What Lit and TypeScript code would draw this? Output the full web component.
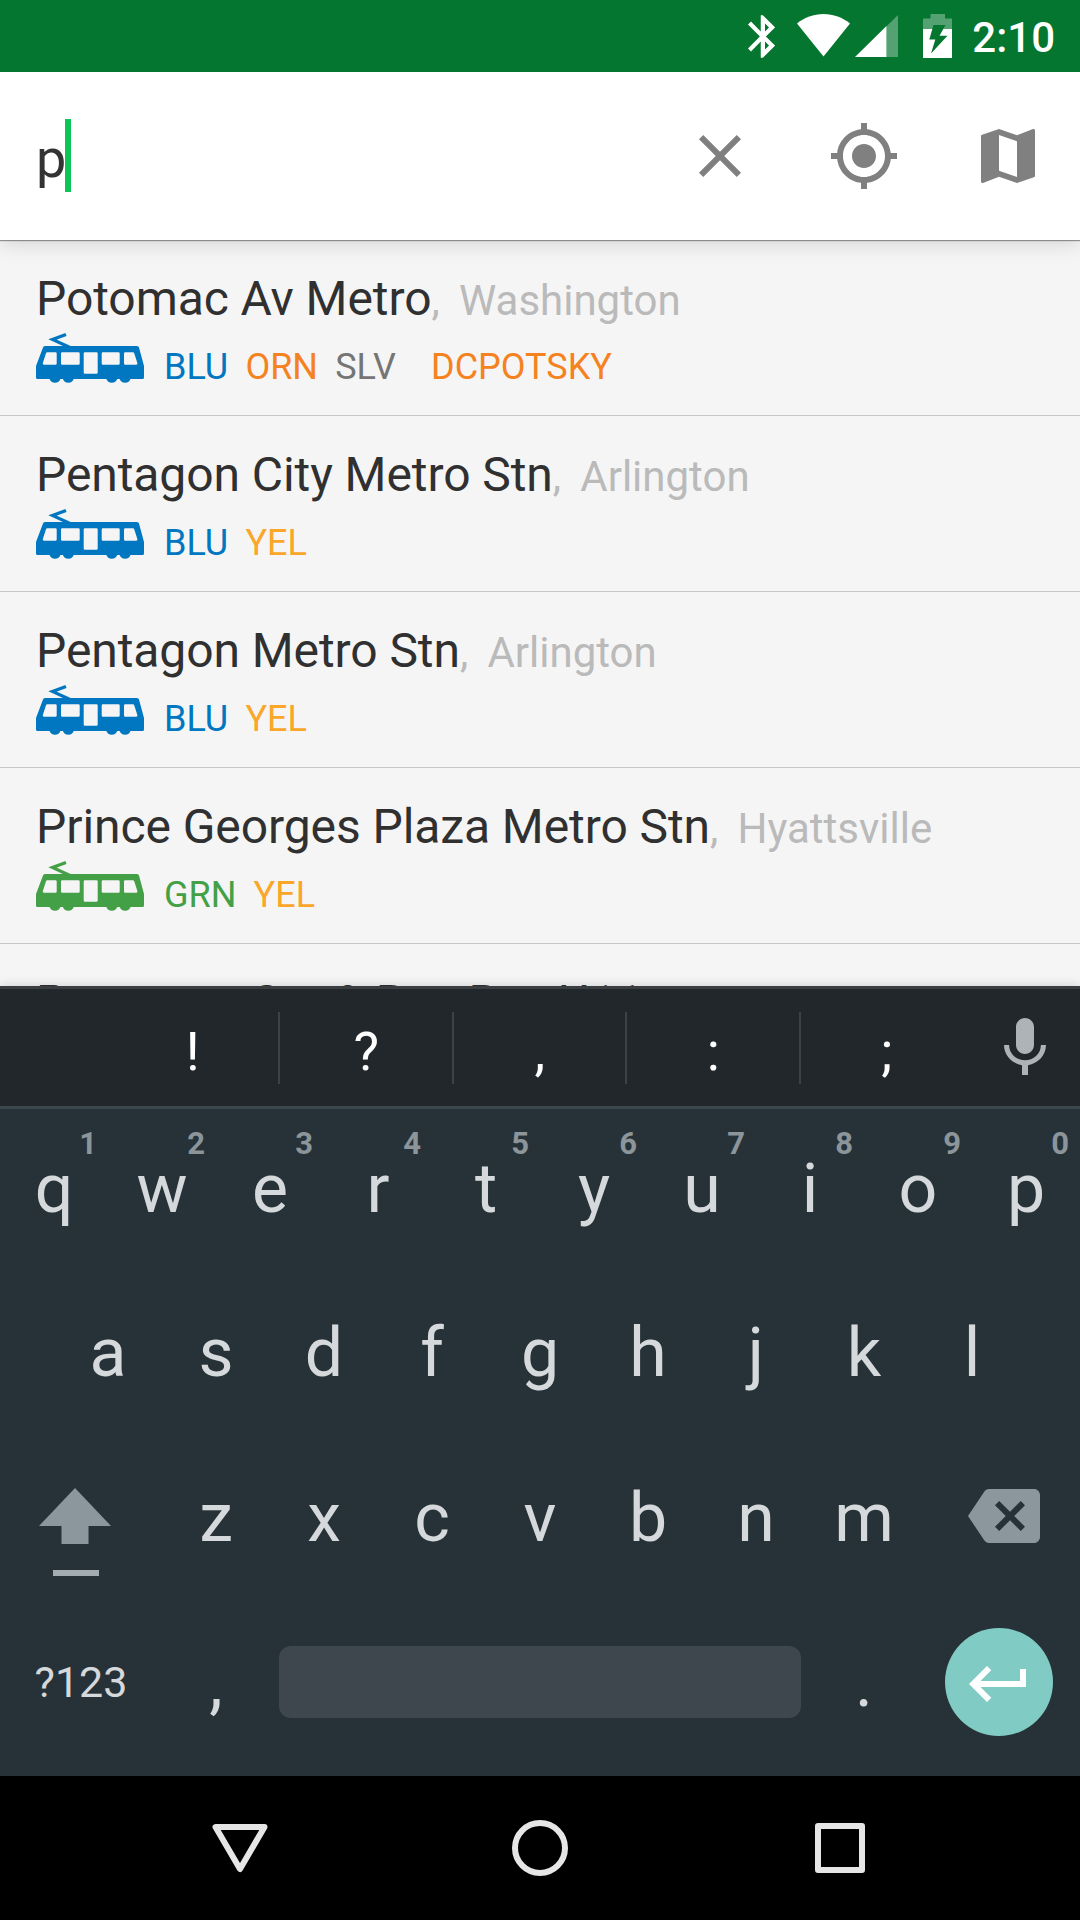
import { LitElement, html, css, svg, nothing } from "lit";
import { customElement, property } from "lit/decorators.js";

type Line = { code: string; tone: string; apart?: boolean };
type Stop = { name: string; city: string; tram: string; lines: Line[] };

const STOPS: Stop[] = [
  {
    name: "Potomac Av Metro",
    city: "Washington",
    tram: "blue",
    lines: [
      { code: "BLU", tone: "blue" },
      { code: "ORN", tone: "orange" },
      { code: "SLV", tone: "silver" },
      { code: "DCPOTSKY", tone: "orange", apart: true },
    ],
  },
  {
    name: "Pentagon City Metro Stn",
    city: "Arlington",
    tram: "blue",
    lines: [
      { code: "BLU", tone: "blue" },
      { code: "YEL", tone: "yellow" },
    ],
  },
  {
    name: "Pentagon Metro Stn",
    city: "Arlington",
    tram: "blue",
    lines: [
      { code: "BLU", tone: "blue" },
      { code: "YEL", tone: "yellow" },
    ],
  },
  {
    name: "Prince Georges Plaza Metro Stn",
    city: "Hyattsville",
    tram: "green",
    lines: [
      { code: "GRN", tone: "green" },
      { code: "YEL", tone: "yellow" },
    ],
  },
  { name: "Pentagon Stn & Bus Bay U11", city: "", tram: "blue", lines: [] },
];

@customElement("status-bar")
export class StatusBar extends LitElement {
  static styles = css`
    :host {
      display: flex;
      height: 72px;
      background: #04762f;
      color: #fff;
      justify-content: flex-end;
      align-items: flex-start;
      padding-right: 25px;
      box-sizing: border-box;
      flex: none;
    }
    svg {
      display: block;
      flex: none;
    }
    .bt { margin: 15px 22px 0 0; }
    .wifi { margin: 14px 5px 0 0; }
    .signal { margin: 15px 25px 0 0; }
    .battery { margin: 14px 20px 0 0; }
    .clock {
      font: 500 42px/48px Roboto, sans-serif;
      margin-top: 14px;
    }
  `;
  render() {
    return html`
      <svg class="bt" width="27" height="43" viewBox="5 2 12.7 20">
        <path fill="#fff" d="M17.71 7.71L12 2h-1v7.59L6.41 5 5 6.41 10.59 12 5 17.59 6.41 19 11 14.41V22h1l5.71-5.71-4.3-4.29 4.3-4.29zM13 5.83l1.88 1.88L13 9.59V5.83zm1.88 10.46L13 18.17v-3.76l1.88 1.88z" />
      </svg>
      <svg class="wifi" width="53" height="43" viewBox="0 0 53 43">
        <path fill="#fff" d="M0 9.5C7.6 3.4 16.500 0 26.500 0S45.400 3.400 53 9.500L26.500 42.500z" />
      </svg>
      <svg class="signal" width="43" height="42" viewBox="0 0 43 42">
        <path fill="#fff" opacity=".32" d="M31.500 11.300L43 0v42H31.500z" />
        <path fill="#fff" d="M0 42L31.500 11v31z" />
      </svg>
      <svg class="battery" width="29" height="44" viewBox="0 0 29 44">
        <path fill="#fff" opacity=".32" d="M7.500 0h14.500v4.500h7V15H0V4.500h7.500z" />
        <path fill="#fff" d="M0 15h29v29H0z" />
        <path fill="#04762f" d="M10.500 11h12l-6 10.700h8L8 39.500l4.300-14H6.300z" />
      </svg>
      <div class="clock">2:10</div>
    `;
  }
}

@customElement("search-header")
export class SearchHeader extends LitElement {
  static styles = css`
    :host {
      display: flex;
      height: 168px;
      background: #fff;
      align-items: center;
      flex: none;
      z-index: 1;
      box-shadow: 0 1px 1px rgba(0, 0, 0, 0.38), 0 4px 20px rgba(0, 0, 0, 0.13);
      clip-path: inset(0 0 -30px 0);
    }
    .query {
      flex: 1;
      display: flex;
      align-items: center;
      padding-left: 36px;
    }
    .text {
      font: 400 54px/64px Roboto, sans-serif;
      color: #333;
      margin-top: 6px;
    }
    .caret {
      width: 6px;
      height: 73px;
      margin-left: -1px;
      margin-bottom: 2px;
      background: #0cc657;
    }
    .action {
      width: 144px;
      display: flex;
      justify-content: center;
    }
    svg {
      display: block;
      fill: #808080;
    }
  `;
  render() {
    return html`
      <div class="query"><span class="text">p</span><span class="caret"></span></div>
      <div class="action">
        <svg width="72" height="72" viewBox="0 0 24 24"><path d="M19 6.410L17.590 5 12 10.590 6.410 5 5 6.410 10.590 12 5 17.590 6.410 19 12 13.410 17.590 19 19 17.590 13.410 12z" /></svg>
      </div>
      <div class="action">
        <svg width="72" height="72" viewBox="0 0 24 24"><path d="M12 8c-2.210 0-4 1.790-4 4s1.790 4 4 4 4-1.790 4-4-1.790-4-4-4zm8.940 3c-.46-4.170-3.770-7.480-7.940-7.940V1h-2v2.060C6.830 3.520 3.520 6.830 3.060 11H1v2h2.060c.46 4.170 3.770 7.480 7.940 7.940V23h2v-2.060c4.170-.46 7.480-3.770 7.940-7.940H23v-2h-2.060zM12 19c-3.870 0-7-3.130-7-7s3.130-7 7-7 7 3.130 7 7-3.130 7-7 7z" /></svg>
      </div>
      <div class="action">
        <svg width="72" height="72" viewBox="0 0 24 24"><path d="M20.500 3l-.16.03L15 5.100 9 3 3.360 4.900c-.21.07-.36.25-.36.48V20.500c0 .28.22.5.5.5l.16-.03L9 18.900l6 2.100 5.640-1.900c.21-.07.36-.25.36-.48V3.500c0-.28-.22-.5-.5-.5zM15 19l-6-2.110V5l6 2.110V19z" /></svg>
      </div>
    `;
  }
}

@customElement("stop-row")
export class StopRow extends LitElement {
  @property({ attribute: false }) stop!: Stop;
  static styles = css`
    :host {
      display: block;
      height: 176px;
      flex: none;
      box-sizing: border-box;
      padding: 31px 36px 0;
      border-bottom: 1px solid #c6c8c8;
      font-family: Roboto, sans-serif;
      white-space: nowrap;
    }
    .title {
      display: flex;
      align-items: baseline;
      height: 56px;
      line-height: 56px;
      font-size: 48px;
      letter-spacing: -0.08px;
      color: #303030;
    }
    .city {
      font-size: 42px;
      letter-spacing: 0;
      word-spacing: -0.8px;
      color: #bababa;
      white-space: pre;
    }
    .lines {
      display: flex;
      align-items: flex-start;
      padding-top: 6px;
    }
    svg {
      display: block;
      margin-right: 20px;
    }
    .codes {
      display: flex;
      gap: 17.2px;
      font-size: 36px;
      line-height: 48px;
      margin-top: 10px;
    }
    .apart { margin-left: 18px; }
    .blue { color: #0077c0; }
    .orange { color: #f58220; }
    .silver { color: #757575; }
    .yellow { color: #faa629; }
    .green { color: #43a047; }
  `;
  render() {
    const s = this.stop;
    return html`
      <div class="title">
        <span>${s.name}</span>${s.city ? html`<span class="city">,  ${s.city}</span>` : nothing}
      </div>
      ${s.lines.length
        ? html`<div class="lines">
            <svg class=${s.tram} width="108" height="51" viewBox="0 0 108 51">
              <path fill="none" stroke="currentColor" stroke-width="3.200" d="M30 1.500L16.500 6.500 34 14.500" />
              <path
                fill="currentColor"
                fill-rule="evenodd"
                d="M9 13h92q1.500 0 2 1.500L108 33v11.500q0 1.500-1.500 1.500H94.500a5.600 5 0 0 1-10.800 0h-2.500a5.600 5 0 0 1-10.800 0H37.700a5.600 5 0 0 1-10.800 0h-2.500a5.600 5 0 0 1-10.800 0H1.500Q0 46 0 44.500V33L7 14.500Q7.400 13 9 13z
                M11.500 19.300h8q1.200 0 1.200 1.200v10q0 1.200-1.200 1.200H8q-1.500 0-1.200-1.400l3-9.600q.4-1.400 1.700-1.400z
                M26.200 19.300h16.300q1.200 0 1.200 1.200v10q0 1.200-1.200 1.200H26.200q-1.200 0-1.200-1.200v-10q0-1.200 1.200-1.200z
                M48.900 19.300h11.600q1.200 0 1.200 1.200v19q0 1.200-1.200 1.200H48.900q-1.200 0-1.200-1.200v-19q0-1.200 1.200-1.200z
                M66.900 19.300h15.600q1.200 0 1.200 1.200v10q0 1.200-1.200 1.200H66.900q-1.200 0-1.200-1.200v-10q0-1.200 1.200-1.200z
                M89.200 19.300h7.500q1.300 0 1.700 1.400l3 9.600q.3 1.400-1.200 1.400h-11q-1.200 0-1.200-1.200v-10q0-1.200 1.200-1.200z"
              />
            </svg>
            <div class="codes">
              ${s.lines.map((l) => html`<span class="${l.tone} ${l.apart ? "apart" : ""}">${l.code}</span>`)}
            </div>
          </div>`
        : nothing}
    `;
  }
}

@customElement("key-board")
export class KeyBoard extends LitElement {
  static styles = css`
    :host {
      display: flex;
      flex-direction: column;
      height: 790px;
      flex: none;
      z-index: 1;
      background: #273238;
      font-family: Roboto, sans-serif;
      color: #d5d9dc;
      box-shadow: 0 0 10px rgba(0, 0, 0, 0.16);
    }
    svg { display: block; }
    .suggest {
      display: flex;
      height: 123px;
      box-sizing: border-box;
      border-top: 3px solid #3a3e41;
      border-bottom: 3px solid #3d484e;
      background: #22272b;
      padding-left: 106.5px;
      align-items: center;
    }
    .mark {
      width: 173.5px;
      height: 72px;
      box-sizing: border-box;
      border-right: 2px solid #3c4347;
      padding-left: 1px;
      text-align: center;
      font-size: 54px;
      line-height: 80px;
      color: #fff;
      margin-top: 1px;
    }
    .mark:nth-child(5) { border-right-color: transparent; }
    .mic { margin: 1px 0 0 15px; }
    .row {
      display: flex;
      height: 165px;
      align-items: center;
      font-size: 68px;
      line-height: 80px;
    }
    .first { height: 161px; padding-bottom: 2px; box-sizing: border-box; }
    .second { padding: 0 54px; }
    .key {
      width: 108px;
      text-align: center;
      position: relative;
    }
    .hint {
      position: absolute;
      top: -23px;
      right: 11px;
      font-size: 31px;
      line-height: 36px;
      font-weight: 700;
      color: #8b959a;
    }
    .wide {
      width: 162px;
      display: flex;
      justify-content: center;
    }
    .shift { justify-content: flex-start; padding: 29px 0 0 39px; box-sizing: border-box; }
    .back { padding: 0 0 3px 10px; box-sizing: border-box; }
    .mode { font-size: 43px; margin-bottom: 2px; }
    .space {
      width: 522px;
      height: 72px;
      margin: 0 9px 2px;
      border-radius: 12px;
      background: #3d474d;
    }
    .enter {
      width: 108px;
      height: 108px;
      margin-bottom: 2px;
      border-radius: 50%;
      background: #80cbc4;
      display: flex;
      align-items: center;
      justify-content: center;
    }
    .enter svg { margin-top: 4px; }
  `;
  private keys(letters: string, hints = "") {
    return [...letters].map(
      (c, i) => html`<div class="key">${c}${hints ? html`<span class="hint">${hints[i]}</span>` : nothing}</div>`,
    );
  }
  render() {
    return html`
      <div class="suggest">
        ${["!", "?", ",", ":", ";"].map((c) => html`<div class="mark">${c}</div>`)}
        <svg class="mic" width="72" height="72" viewBox="0 0 24 24"><path fill="#aeb3b7" d="M12 14c1.660 0 2.990-1.340 2.990-3L15 5c0-1.660-1.340-3-3-3S9 3.340 9 5v6c0 1.660 1.340 3 3 3zm5.300-3c0 3-2.540 5.100-5.300 5.100S6.700 14 6.700 11H5c0 3.410 2.720 6.230 6 6.720V21h2v-3.280c3.280-.48 6-3.300 6-6.720h-1.700z" /></svg>
      </div>
      <div class="row first">${this.keys("qwertyuiop", "1234567890")}</div>
      <div class="row second">${this.keys("asdfghjkl")}</div>
      <div class="row">
        <div class="wide shift">
          <svg width="72" height="88" viewBox="0 0 72 88">
            <path fill="#8b979d" d="M36 0l36 38H49.500v18h-27V38H0z" />
            <path fill="#a3adb1" d="M14 82h46v6H14z" />
          </svg>
        </div>
        ${this.keys("zxcvbnm")}
        <div class="wide back">
          <svg width="72" height="72" viewBox="0 0 24 24"><path fill="#8b979d" d="M22 3H7c-.69 0-1.230.35-1.590.88L0 12l5.410 8.110c.36.53.9.89 1.590.89h15c1.100 0 2-.9 2-2V5c0-1.100-.9-2-2-2zm-3 12.590L17.590 17 14 13.410 10.410 17 9 15.590 12.590 12 9 8.410 10.410 7 14 10.590 17.590 7 19 8.410 15.410 12 19 15.590z" /></svg>
        </div>
      </div>
      <div class="row">
        <div class="wide mode"><span>?123</span></div>
        ${this.keys(",")}
        <div class="space"></div>
        ${this.keys(".")}
        <div class="wide">
          <div class="enter">
            <svg width="72" height="72" viewBox="0 0 24 24"><path fill="#fff" d="M19 7v4H5.830l3.580-3.590L8 6l-6 6 6 6 1.410-1.410L5.830 13H21V7z" /></svg>
          </div>
        </div>
      </div>
    `;
  }
}

@customElement("nav-bar")
export class NavBar extends LitElement {
  static styles = css`
    :host {
      display: flex;
      height: 144px;
      flex: none;
      z-index: 1;
      background: #000;
      padding: 0 90px;
      box-sizing: border-box;
    }
    .slot {
      width: 300px;
      display: flex;
      align-items: center;
      justify-content: center;
    }
    svg { display: block; fill: none; stroke: #e6e6e6; stroke-width: 6; stroke-linejoin: round; }
  `;
  render() {
    const shapes = [
      svg`<path d="M7.500 11h49L32 53z" />`,
      svg`<circle cx="32" cy="32" r="25" />`,
      svg`<rect x="10" y="10" width="44" height="44" />`,
    ];
    return html`${shapes.map((s) => html`<div class="slot"><svg width="64" height="64" viewBox="0 0 64 64">${s}</svg></div>`)}`;
  }
}

@customElement("app-root")
export class AppRoot extends LitElement {
  static styles = css`
    :host {
      display: flex;
      flex-direction: column;
      width: 1080px;
      height: 1920px;
      overflow: hidden;
      background: #f5f5f5;
    }
    .list {
      flex: 1;
      min-height: 0;
      overflow: hidden;
      display: flex;
      flex-direction: column;
    }
  `;
  render() {
    return html`
      <status-bar></status-bar>
      <search-header></search-header>
      <div class="list">${STOPS.map((s) => html`<stop-row .stop=${s}></stop-row>`)}</div>
      <key-board></key-board>
      <nav-bar></nav-bar>
    `;
  }
}
